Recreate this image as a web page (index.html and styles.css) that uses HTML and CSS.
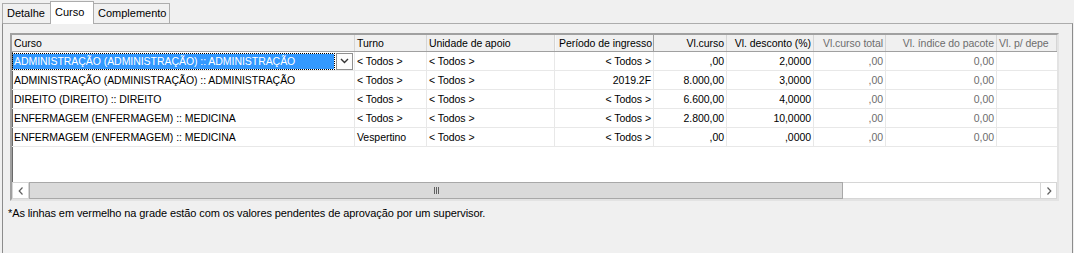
FILE: index.html
```html
<!DOCTYPE html>
<html lang="pt">
<head>
<meta charset="utf-8">
<title>Curso</title>
<link rel="stylesheet" href="styles.css">
</head>
<body>
<div class="tabs">
  <div class="tab tab-first">Detalhe</div>
  <div class="tab tab-active">Curso</div>
  <div class="tab">Complemento</div>
</div>
<div class="panel">
  <div class="grid">
    <div class="row head">
      <div class="c c1">Curso</div>
      <div class="c c2">Turno</div>
      <div class="c c3">Unidade de apoio</div>
      <div class="c c4 r">Período de ingresso</div>
      <div class="c c5 r">Vl.curso</div>
      <div class="c c6 r">Vl. desconto (%)</div>
      <div class="c c7 r dim">Vl.curso total</div>
      <div class="c c8 r dim">Vl. índice do pacote</div>
      <div class="c c9 dim">Vl. p/ depe</div>
    </div>
    <div class="body">
      <div class="row">
        <div class="c c1 editing">
          <span class="sel">ADMINISTRAÇÃO (ADMINISTRAÇÃO) :: ADMINISTRAÇÃO</span>
          <span class="drop"><svg width="9" height="6" viewBox="0 0 9 6"><path d="M1 1 L4.5 4.5 L8 1" fill="none" stroke="#333" stroke-width="1.4"/></svg></span>
        </div>
        <div class="c c2">&lt; Todos &gt;</div>
        <div class="c c3">&lt; Todos &gt;</div>
        <div class="c c4 r">&lt; Todos &gt;</div>
        <div class="c c5 r">,00</div>
        <div class="c c6 r">2,0000</div>
        <div class="c c7 r dim">,00</div>
        <div class="c c8 r dim">0,00</div>
        <div class="c c9"></div>
      </div>
      <div class="row">
        <div class="c c1">ADMINISTRAÇÃO (ADMINISTRAÇÃO) :: ADMINISTRAÇÃO</div>
        <div class="c c2">&lt; Todos &gt;</div>
        <div class="c c3">&lt; Todos &gt;</div>
        <div class="c c4 r">2019.2F</div>
        <div class="c c5 r">8.000,00</div>
        <div class="c c6 r">3,0000</div>
        <div class="c c7 r dim">,00</div>
        <div class="c c8 r dim">0,00</div>
        <div class="c c9"></div>
      </div>
      <div class="row">
        <div class="c c1">DIREITO (DIREITO) :: DIREITO</div>
        <div class="c c2">&lt; Todos &gt;</div>
        <div class="c c3">&lt; Todos &gt;</div>
        <div class="c c4 r">&lt; Todos &gt;</div>
        <div class="c c5 r">6.600,00</div>
        <div class="c c6 r">4,0000</div>
        <div class="c c7 r dim">,00</div>
        <div class="c c8 r dim">0,00</div>
        <div class="c c9"></div>
      </div>
      <div class="row">
        <div class="c c1">ENFERMAGEM (ENFERMAGEM) :: MEDICINA</div>
        <div class="c c2">&lt; Todos &gt;</div>
        <div class="c c3">&lt; Todos &gt;</div>
        <div class="c c4 r">&lt; Todos &gt;</div>
        <div class="c c5 r">2.800,00</div>
        <div class="c c6 r">10,0000</div>
        <div class="c c7 r dim">,00</div>
        <div class="c c8 r dim">0,00</div>
        <div class="c c9"></div>
      </div>
      <div class="row">
        <div class="c c1">ENFERMAGEM (ENFERMAGEM) :: MEDICINA</div>
        <div class="c c2">Vespertino</div>
        <div class="c c3">&lt; Todos &gt;</div>
        <div class="c c4 r">&lt; Todos &gt;</div>
        <div class="c c5 r">,00</div>
        <div class="c c6 r">,0000</div>
        <div class="c c7 r dim">,00</div>
        <div class="c c8 r dim">0,00</div>
        <div class="c c9"></div>
      </div>
    </div>
    <div class="hscroll">
      <div class="sbtn"><svg width="6" height="8" viewBox="0 0 6 8"><path d="M4.5 0.5 L1.2 4 L4.5 7.5" fill="none" stroke="#606060" stroke-width="1.2"/></svg></div>
      <div class="thumb"><span class="grip"></span><span class="grip"></span><span class="grip"></span></div>
      <div class="track"></div>
      <div class="sbtn"><svg width="6" height="8" viewBox="0 0 6 8"><path d="M1.5 0.5 L4.8 4 L1.5 7.5" fill="none" stroke="#606060" stroke-width="1.2"/></svg></div>
    </div>
  </div>
  <p class="note">*As linhas em vermelho na grade estão com os valores pendentes de aprovação por um supervisor.</p>
</div>
</body>
</html>
```

FILE: styles.css
```css
html, body {
  margin: 0;
  padding: 0;
  background: #f0f0f0;
}
body {
  font-family: "Liberation Sans", Arial, sans-serif;
  font-size: 11px;
  color: #000;
  width: 1074px;
  height: 253px;
  overflow: hidden;
}
.tabs {
  display: flex;
  align-items: flex-end;
  height: 23px;
  margin-left: 2px;
}
.tab {
  height: 19px;
  line-height: 19px;
  padding: 0 4px;
  border: 1px solid #acacac;
  border-bottom: none;
  border-left: none;
  background: #f0f0f0;
  box-sizing: content-box;
  position: relative;
}
.tab-first {
  border-left: 1px solid #acacac;
  width: 39px;
}
.tab-active {
  height: 22px;
  line-height: 20px;
  background: #fff;
  border-left: 1px solid #acacac;
  margin-left: -1px;
  width: 34px;
  z-index: 2;
  margin-bottom: -1px;
}
.tab-active + .tab {
  width: 67px;
}
.panel {
  margin: 0 1px 0 2px;
  height: 227px;
  border: 1px solid #8c8c8c;
  border-top-color: #acacac;
  background: #f0f0f0;
  padding: 9px 0 0 7px;
  box-sizing: content-box;
}
.grid {
  width: 1045px;
  border: 2px solid;
  border-color: #a0a0a0 #e3e3e3 #e3e3e3 #a0a0a0;
  box-shadow: inset 1px 1px 0 #696969;
  background: #fff;
  font-size: 10.5px;
  letter-spacing: -0.05px;
}
.row {
  display: flex;
  height: 19px;
  border-bottom: 1px solid #e8e8e8;
  box-sizing: border-box;
}
.head {
  height: 17px;
  background: #f0f0f0;
  border-bottom: 1px solid #a0a0a0;
}
.c {
  box-sizing: border-box;
  padding: 0 2px;
  white-space: nowrap;
  overflow: hidden;
  line-height: 18px;
  border-right: 1px solid #e8e8e8;
  flex: none;
}
.head .c {
  line-height: 16px;
  border-right: 1px solid #d5d5d5;
}
.head .c4 {
  border: 1px solid #a0a0a0;
  border-top: none;
  border-bottom: none;
  border-left-color: #f8f8f8;
  padding: 0 1px 0 0;
}
.r { text-align: right; }
.dim { color: #6d6d6d; }
.c1 { width: 343px; }
.c2 { width: 72px; }
.c3 { width: 128px; }
.c4 { width: 99px; }
.c5 { width: 73px; }
.c6 { width: 87px; }
.c7 { width: 72px; }
.c8 { width: 111px; }
.c9 { width: 60px; border-right: none; }
.body {
  height: 130px;
}
.editing {
  display: flex;
  align-items: center;
  padding: 0 1px;
  gap: 2px;
}
.sel {
  flex: 1;
  height: 15px;
  line-height: 15px;
  background: #3399ff;
  color: #fff;
  outline: 1px dotted #000;
  padding-left: 1px;
  overflow: hidden;
}
.drop {
  width: 17px;
  height: 17px;
  box-sizing: border-box;
  border: 1px solid #8f8f8f;
  background: #fcfcfc;
  display: flex;
  align-items: center;
  justify-content: center;
}
.hscroll {
  display: flex;
  height: 17px;
  background: #fff;
}
.sbtn {
  width: 17px;
  height: 17px;
  box-sizing: border-box;
  border: 1px solid #d6d6d6;
  background: #fff;
  display: flex;
  align-items: center;
  justify-content: center;
}
.thumb {
  width: 814px;
  height: 17px;
  box-sizing: border-box;
  background: #dadada;
  border: 1px solid #a8a8a8;
  display: flex;
  align-items: center;
  justify-content: center;
  gap: 1px;
}
.grip {
  width: 1px;
  height: 7px;
  background: #606060;
}
.track {
  flex: 1;
  border-top: 1px solid #d6d6d6;
  border-bottom: 1px solid #d6d6d6;
}
.note {
  margin: 6px 0 0 -2px;
  line-height: 13px;
  letter-spacing: -0.1px;
}
```
